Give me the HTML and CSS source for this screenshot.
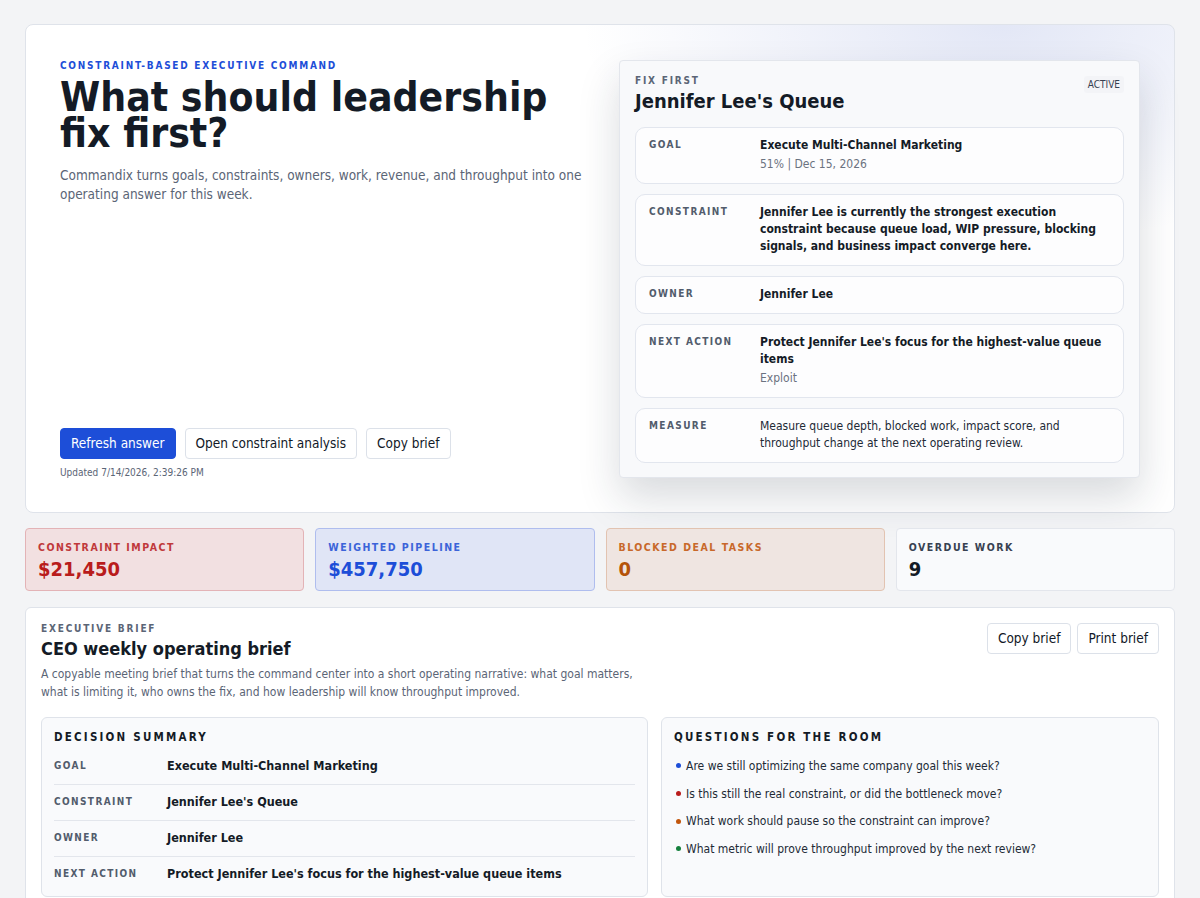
FILE: index.html
```html
<html>
    <head>
        <link rel="stylesheet" href="styles.css">
        <title>Commandix - Command Center</title>
    </head>
    <body>
        <section class="hero">
            <div class="hero-main">
                <div>
                    <div class="eyebrow">Constraint-based executive command</div>
                    <h1>What should leadership fix first?</h1>
                    <p class="lead">Commandix turns goals, constraints, owners, work, revenue, and throughput into one operating answer for this week.</p>
                </div>
                <div>
                    <div class="actions">
                        <a href="#" class="button primary">Refresh answer</a>
                        <a href="#" class="button">Open constraint analysis</a>
                        <a href="#" class="button">Copy brief</a>
                    </div>
                    <div class="updated">Updated 7/14/2026, 2:39:26 PM</div>
                </div>
            </div>

            <div class="answer">
                <div class="answer-head">
                    <div>
                        <div class="kicker">Fix first</div>
                        <h2>Jennifer Lee's Queue</h2>
                    </div>
                    <span class="badge">ACTIVE</span>
                </div>
                <div class="answer-row">
                    <div class="row-label">Goal</div>
                    <div>
                        <div class="row-value">Execute Multi-Channel Marketing</div>
                        <div class="row-sub">51% | Dec 15, 2026</div>
                    </div>
                </div>
                <div class="answer-row">
                    <div class="row-label">Constraint</div>
                    <div class="row-value">Jennifer Lee is currently the strongest execution constraint because queue load, WIP pressure, blocking signals, and business impact converge here.</div>
                </div>
                <div class="answer-row">
                    <div class="row-label">Owner</div>
                    <div class="row-value">Jennifer Lee</div>
                </div>
                <div class="answer-row">
                    <div class="row-label">Next action</div>
                    <div>
                        <div class="row-value">Protect Jennifer Lee's focus for the highest-value queue items</div>
                        <div class="row-sub">Exploit</div>
                    </div>
                </div>
                <div class="answer-row">
                    <div class="row-label">Measure</div>
                    <div class="row-text">Measure queue depth, blocked work, impact score, and throughput change at the next operating review.</div>
                </div>
            </div>
        </section>

        <section class="metrics">
            <div class="metric red">
                <div class="metric-label">Constraint impact</div>
                <div class="metric-value">$21,450</div>
            </div>
            <div class="metric blue">
                <div class="metric-label">Weighted pipeline</div>
                <div class="metric-value">$457,750</div>
            </div>
            <div class="metric orange">
                <div class="metric-label">Blocked deal tasks</div>
                <div class="metric-value">0</div>
            </div>
            <div class="metric plain">
                <div class="metric-label">Overdue work</div>
                <div class="metric-value">9</div>
            </div>
        </section>

        <section class="brief">
            <div class="brief-head">
                <div>
                    <div class="kicker">Executive brief</div>
                    <h3>CEO weekly operating brief</h3>
                    <p class="brief-desc">A copyable meeting brief that turns the command center into a short operating narrative: what goal matters, what is limiting it, who owns the fix, and how leadership will know throughput improved.</p>
                </div>
                <div class="actions">
                    <a href="#" class="button">Copy brief</a>
                    <a href="#" class="button">Print brief</a>
                </div>
            </div>
            <div class="brief-grid">
                <div class="panel">
                    <h4>Decision summary</h4>
                    <div class="summary-row">
                        <div class="row-label">Goal</div>
                        <div class="row-value">Execute Multi-Channel Marketing</div>
                    </div>
                    <div class="summary-row">
                        <div class="row-label">Constraint</div>
                        <div class="row-value">Jennifer Lee's Queue</div>
                    </div>
                    <div class="summary-row">
                        <div class="row-label">Owner</div>
                        <div class="row-value">Jennifer Lee</div>
                    </div>
                    <div class="summary-row">
                        <div class="row-label">Next action</div>
                        <div class="row-value">Protect Jennifer Lee's focus for the highest-value queue items</div>
                    </div>
                </div>
                <div class="panel">
                    <h4>Questions for the room</h4>
                    <ul class="questions">
                        <li class="q-blue">Are we still optimizing the same company goal this week?</li>
                        <li class="q-red">Is this still the real constraint, or did the bottleneck move?</li>
                        <li class="q-orange">What work should pause so the constraint can improve?</li>
                        <li class="q-green">What metric will prove throughput improved by the next review?</li>
                    </ul>
                </div>
            </div>
        </section>
    </body>
</html>
```

FILE: styles.css
```css
body {
    margin: 0;
    padding: 24px 25px;
    background-color: #f3f4f6;
    font-family: "DejaVu Sans Condensed", "DejaVu Sans", sans-serif;
    font-stretch: condensed;
    color: #111827;
}
h1, h2, h3, h4, p {
    margin: 0;
}

/* hero */
.hero {
    display: grid;
    grid-template-columns: 1fr 521px;
    gap: 30px;
    padding: 35px 34px 34px;
    background: radial-gradient(ellipse 420px 220px at 85% 0%, rgba(99, 122, 205, 0.18), rgba(255, 255, 255, 0) 100%), #fff;
    border: 1px solid #dfe3ea;
    border-radius: 8px;
}
.hero-main {
    display: flex;
    flex-direction: column;
    justify-content: space-between;
}
.eyebrow {
    font-size: 10px;
    font-weight: bold;
    letter-spacing: 1.75px;
    text-transform: uppercase;
    color: #1d4ed8;
}
h1 {
    margin-top: 8px;
    font-size: 40.5px;
    line-height: 36px;
    font-weight: bold;
    color: #141b26;
}
.lead {
    margin-top: 15px;
    font-size: 13.5px;
    line-height: 19px;
    color: #5b6576;
}
.actions {
    display: flex;
    gap: 9px;
}
.button {
    display: inline-block;
    padding: 7px 10px;
    font-size: 13.5px;
    line-height: 15px;
    color: #111827;
    text-decoration: none;
    background: #fff;
    border: 1px solid #dce1e9;
    border-radius: 4px;
}
.button.primary {
    background: #1d4ed8;
    border-color: #1d4ed8;
    color: #fff;
}
.updated {
    margin-top: 8px;
    font-size: 10px;
    color: #5b6576;
}

/* fix-first card */
.answer {
    padding: 14px 15px 14px;
    background: #f8f9fb;
    border: 1px solid #e3e6ec;
    border-radius: 4px;
    box-shadow: 0 20px 40px rgba(30, 41, 59, 0.17);
}
.answer-head {
    display: flex;
    justify-content: space-between;
    align-items: flex-start;
    margin-bottom: 14px;
}
.kicker {
    font-size: 10px;
    font-weight: bold;
    letter-spacing: 1.8px;
    text-transform: uppercase;
    color: #5b6576;
}
h2 {
    margin-top: 3px;
    font-size: 20px;
    line-height: 24px;
    font-weight: bold;
    color: #141b26;
}
.badge {
    margin-top: 1px;
    padding: 3px 4px;
    font-size: 10px;
    color: #374151;
    background: #f3f4f7;
    border-radius: 3px;
}
.answer-row {
    display: grid;
    grid-template-columns: 111px 1fr;
    padding: 9px 13px 10px;
    margin-top: 10px;
    background: #fdfdfe;
    border: 1px solid #e2e6ee;
    border-radius: 10px;
}
.answer-row:first-of-type {
    margin-top: 0;
}
.row-label {
    padding-top: 2px;
    font-size: 10px;
    font-weight: bold;
    letter-spacing: 1.4px;
    text-transform: uppercase;
    color: #525c6c;
}
.row-value {
    font-size: 12px;
    line-height: 17px;
    font-weight: bold;
    color: #141b26;
}
.row-sub {
    margin-top: 2px;
    font-size: 12px;
    line-height: 17px;
    color: #6b7280;
}
.row-text {
    font-size: 12px;
    line-height: 17px;
    color: #222a36;
}

/* metric tiles */
.metrics {
    display: grid;
    grid-template-columns: repeat(4, 1fr);
    gap: 11px;
    margin-top: 15px;
}
.metric {
    padding: 12px 12px 9px;
    border: 1px solid #e3e6ec;
    border-radius: 4px;
    background: #f9fafc;
}
.metric-label {
    font-size: 10.5px;
    font-weight: bold;
    letter-spacing: 1.5px;
    text-transform: uppercase;
    color: #374151;
}
.metric-value {
    margin-top: 4px;
    font-size: 20px;
    line-height: 24px;
    font-weight: bold;
    color: #141b26;
}
.metric.red {
    background: #f2e0e1;
    border-color: #e3b3b6;
}
.metric.red .metric-label { color: #c0393b; }
.metric.red .metric-value { color: #b91c1c; }
.metric.blue {
    background: #e0e5f6;
    border-color: #afbdee;
}
.metric.blue .metric-label { color: #3b63d9; }
.metric.blue .metric-value { color: #1d4ed8; }
.metric.orange {
    background: #efe5e1;
    border-color: #e2c3b1;
}
.metric.orange .metric-label { color: #c8682a; }
.metric.orange .metric-value { color: #b45309; }

/* executive brief */
.brief {
    margin-top: 16px;
    padding: 15px 15px 16px;
    background: #fff;
    border: 1px solid #dfe3ea;
    border-radius: 6px;
}
.brief-head {
    display: flex;
    justify-content: space-between;
    align-items: flex-start;
}
h3 {
    margin-top: 4px;
    font-size: 18px;
    line-height: 22px;
    font-weight: bold;
    color: #141b26;
}
.brief-desc {
    max-width: 600px;
    margin-top: 5px;
    font-size: 12px;
    line-height: 18px;
    color: #5b6576;
}
.brief .actions {
    gap: 6px;
}
.brief-grid {
    display: grid;
    grid-template-columns: 607px 1fr;
    gap: 13px;
    margin-top: 16px;
}
.panel {
    padding: 12px 12px 4px;
    background: #f9fafc;
    border: 1px solid #dfe3ea;
    border-radius: 6px;
}
h4 {
    margin-bottom: 12px;
    font-size: 11.5px;
    font-weight: bold;
    letter-spacing: 2.2px;
    text-transform: uppercase;
    color: #141b26;
}
.summary-row {
    display: grid;
    grid-template-columns: 113px 1fr;
    padding: 9px 0 10px;
    border-top: 1px solid #e3e6ec;
}
.summary-row:first-of-type {
    border-top: none;
    padding-top: 2px;
}
.summary-row .row-value {
    font-size: 12.5px;
    line-height: 16px;
}
.questions {
    list-style: none;
    margin: -4px 0 0;
    padding: 0;
}
.questions li {
    display: flex;
    align-items: center;
    gap: 5px;
    height: 27.7px;
    font-size: 12px;
    color: #222a36;
}
.questions li::before {
    content: "";
    width: 5px;
    height: 5px;
    margin-left: 2px;
    border-radius: 50%;
    background: #1d4ed8;
}
.questions .q-red::before { background: #b91c1c; }
.questions .q-orange::before { background: #c2560c; }
.questions .q-green::before { background: #15803d; }
```
